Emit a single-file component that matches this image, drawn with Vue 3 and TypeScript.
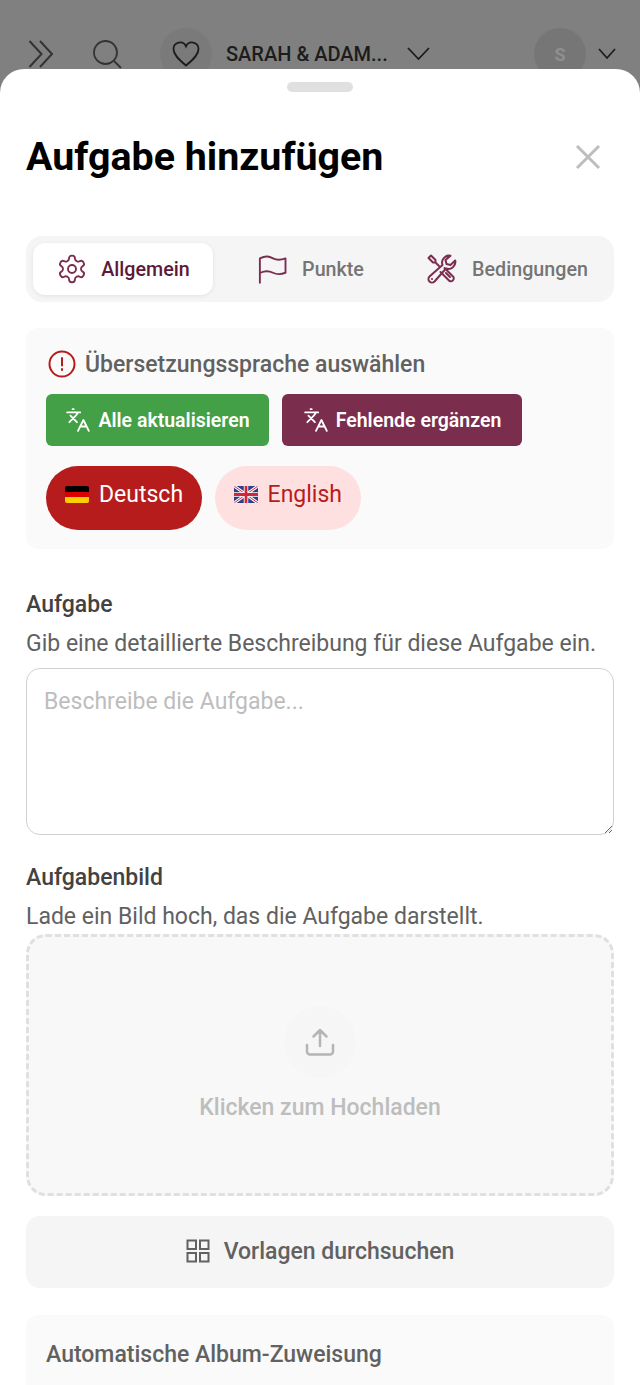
<template>
  <div class="page">
    <header class="topbar">
      <svg class="ic-menu" width="28" height="30" viewBox="0 0 28 30"><path d="M1.500 2l12 13-12 13M12 2l12 13-12 13" /></svg>
      <svg class="ic-search" width="30" height="30" viewBox="0 0 30 30"><circle cx="13.500" cy="13.500" r="11.500" /><path d="M22 22l7 7" /></svg>
      <div class="couple">
        <div class="heart-circle">
          <svg width="28" height="26" viewBox="0 0 28 26"><path d="M14 24.500C6 18 1.500 13.500 1.500 8A6.500 6.500 0 0 1 14 5.500 6.500 6.500 0 0 1 26.500 8C26.500 13.500 22 18 14 24.500z" /></svg>
        </div>
        <span class="couple-name">SARAH &amp; ADAM...</span>
        <svg class="chev" width="23" height="14" viewBox="0 0 23 14"><path d="M1 1l10.500 11L22 1" /></svg>
      </div>
      <div class="avatar">S</div>
      <svg class="chev" width="18" height="12" viewBox="0 0 18 12"><path d="M1 1l8 9 8-9" /></svg>
    </header>

    <section class="sheet">
      <div class="handle"></div>
      <div class="title-row">
        <h1>Aufgabe hinzufügen</h1>
        <svg class="close" width="26" height="26" viewBox="0 0 26 26"><path d="M2 2l22 22M24 2L2 24" /></svg>
      </div>

      <nav class="tabs">
        <button v-for="tab in tabs" :key="tab.id" :class="['tab', { active: tab.id === activeTab }]" @click="activeTab = tab.id">
          <svg :width="tab.size" :height="tab.size" :viewBox="tab.box" :stroke-width="tab.stroke" class="tab-icon">
            <path v-for="(d, i) in tab.paths" :key="i" :d="d" />
            <circle v-if="tab.id === 'general'" cx="12" cy="12" r="3" />
          </svg>
          <span>{{ tab.label }}</span>
        </button>
      </nav>

      <div class="lang-card">
        <div class="lang-head">
          <svg width="28" height="28" viewBox="0 0 28 28" class="alert"><circle cx="14" cy="14" r="12.500" /><path d="M14 8v7.500M14 19v1" /></svg>
          <span>Übersetzungssprache auswählen</span>
        </div>
        <div class="actions">
          <button class="action green">
            <svg width="26" height="26" viewBox="0 0 24 24"><path d="M5 8l6 6M4 14l6-6 2-3M2 5h12M7 2h1M22 22l-5-10-5 10M14 18h6" /></svg>
            Alle aktualisieren
          </button>
          <button class="action plum">
            <svg width="26" height="26" viewBox="0 0 24 24"><path d="M5 8l6 6M4 14l6-6 2-3M2 5h12M7 2h1M22 22l-5-10-5 10M14 18h6" /></svg>
            Fehlende ergänzen
          </button>
        </div>
        <div class="chips">
          <button class="chip on">
            <span class="flag de"></span>
            Deutsch
          </button>
          <button class="chip">
            <svg class="flag" width="24" height="17" viewBox="0 0 24 17">
              <rect width="24" height="17" fill="#2f3f86" />
              <path d="M0 0l24 17M24 0L0 17" stroke="#fff" stroke-width="3" />
              <path d="M0 0l24 17M24 0L0 17" stroke="#d0283a" stroke-width="1" />
              <path d="M12 0v17M0 8.500h24" stroke="#fff" stroke-width="4.500" />
              <path d="M12 0v17M0 8.500h24" stroke="#d0283a" stroke-width="2.800" />
            </svg>
            English
          </button>
        </div>
      </div>

      <div class="field first">
        <label>Aufgabe</label>
        <p>Gib eine detaillierte Beschreibung für diese Aufgabe ein.</p>
        <textarea v-model="description" placeholder="Beschreibe die Aufgabe..."></textarea>
      </div>

      <div class="field second">
        <label>Aufgabenbild</label>
        <p>Lade ein Bild hoch, das die Aufgabe darstellt.</p>
        <div class="dropzone">
          <div class="upload-circle">
            <svg width="30" height="30" viewBox="0 0 30 30"><path d="M15 19V3M8.500 9.500L15 3l6.500 6.500M2 18v6.500a3 3 0 0 0 3 3h20a3 3 0 0 0 3-3V18" /></svg>
          </div>
          <span>Klicken zum Hochladen</span>
        </div>
      </div>

      <button class="browse">
        <svg width="24" height="24" viewBox="0 0 24 24"><rect x="1.500" y="1.500" width="8.500" height="8.500" /><rect x="14" y="1.500" width="8.500" height="8.500" /><rect x="1.500" y="14" width="8.500" height="8.500" /><rect x="14" y="14" width="8.500" height="8.500" /></svg>
        Vorlagen durchsuchen
      </button>

      <div class="album-card">Automatische Album-Zuweisung</div>
    </section>
  </div>
</template>

<script setup lang="ts">
import { ref } from 'vue'

const activeTab = ref('general')
const description = ref('')

const tabs = [
  {
    id: 'general',
    label: 'Allgemein',
    size: 32,
    box: '0 0 24 24',
    stroke: 1.4,
    paths: ['M12.200 2h-.4a2 2 0 0 0-2 2v.2a2 2 0 0 1-1 1.700l-.4.300a2 2 0 0 1-2 0l-.200-.100a2 2 0 0 0-2.700.700l-.200.400a2 2 0 0 0 .700 2.700l.200.100a2 2 0 0 1 1 1.700v.500a2 2 0 0 1-1 1.700l-.200.100a2 2 0 0 0-.700 2.700l.200.400a2 2 0 0 0 2.700.700l.200-.100a2 2 0 0 1 2 0l.4.300a2 2 0 0 1 1 1.700v.200a2 2 0 0 0 2 2h.4a2 2 0 0 0 2-2v-.2a2 2 0 0 1 1-1.700l.4-.300a2 2 0 0 1 2 0l.200.100a2 2 0 0 0 2.700-.700l.200-.400a2 2 0 0 0-.700-2.700l-.200-.100a2 2 0 0 1-1-1.700v-.500a2 2 0 0 1 1-1.700l.200-.100a2 2 0 0 0 .700-2.700l-.200-.400a2 2 0 0 0-2.700-.700l-.200.100a2 2 0 0 1-2 0l-.4-.300a2 2 0 0 1-1-1.700V4a2 2 0 0 0-2-2z']
  },
  {
    id: 'points',
    label: 'Punkte',
    size: 30,
    box: '0 0 24 24',
    stroke: 1.5,
    paths: ['M1.500 23V3.500c5-2.500 7.500-1.500 10.500 0s6 1.500 10 0V15c-4 1.500-7 1.500-10 0s-6-2-10 0']
  },
  {
    id: 'conditions',
    label: 'Bedingungen',
    size: 30,
    box: '0 0 30 30',
    stroke: 2,
    paths: [
      'M23.500 1.800A7 7 0 0 0 15.500 11L2.500 22.500a3.200 3.200 0 0 0 5 5L19 14.500A7 7 0 0 0 28.200 6.500L23.500 11l-4-1-1-4z',
      'M12 12L8.500 8.500H6L1.500 4 4 1.500 8.500 6v2.500',
      'M17.500 14l9 9a3 3 0 0 1-4 4l-9-9',
      'M19 19l4 4M5 25h.01'
    ]
  }
]
</script>

<style>
html, body { margin: 0; }
</style>

<style scoped>
.page {
  position: relative;
  width: 640px;
  height: 1385px;
  overflow: hidden;
  background: #808080;
  font-family: Roboto, "Liberation Sans", sans-serif;
  color: #616161;
}
svg { fill: none; stroke: currentColor; flex-shrink: 0; }

.topbar {
  display: flex;
  align-items: center;
  height: 52px;
  padding: 28px 24px 0 28px;
  color: #1c1c1c;
}
.ic-menu { stroke-width: 2; color: #333; }
.ic-search { margin-left: 36px; stroke-width: 1.800; color: #333; }
.couple { display: flex; align-items: center; margin-left: 38px; flex: 1; }
.heart-circle {
  width: 52px;
  height: 52px;
  border-radius: 50%;
  background: #7a7a7a;
  display: grid;
  place-items: center;
}
.heart-circle svg { stroke-width: 1.800; }
.couple-name { margin-left: 14px; font-size: 20px; font-weight: 500; white-space: nowrap; }
.couple .chev { margin-left: 19px; stroke-width: 1.800; }
.avatar {
  width: 52px;
  height: 52px;
  border-radius: 50%;
  background: #767676;
  color: #8f8f8f;
  display: grid;
  place-items: center;
  font-size: 18px;
  font-weight: 700;
  margin-right: 12px;
}
.chev { stroke-width: 1.700; }

.sheet {
  position: absolute;
  top: 69px;
  left: 0;
  right: 0;
  bottom: 0;
  background: #fff;
  border-radius: 24px 24px 0 0;
  padding: 13px 26px 0;
  box-sizing: border-box;
}
.handle { width: 66px; height: 10px; border-radius: 5px; background: #e0e0e0; margin: 0 auto; }
.title-row {
  display: flex;
  justify-content: space-between;
  align-items: center;
  margin-top: 37px;
  height: 56px;
  padding-right: 13px;
}
h1 { margin: 0; font-size: 39.400px; font-weight: 700; color: #000; line-height: 56px; white-space: nowrap; }
.close { color: #bdbdbd; stroke-width: 3; }

.tabs {
  display: flex;
  margin-top: 51px;
  padding: 7px;
  gap: 5px;
  height: 66px;
  box-sizing: border-box;
  background: #f5f5f5;
  border-radius: 16px;
}
.tab {
  flex: 1 1 auto;
  display: flex;
  align-items: center;
  justify-content: center;
  gap: 14px;
  border: 0;
  border-radius: 12px;
  background: none;
  font: 500 19.700px Roboto, sans-serif;
  color: #757575;
  padding: 0;
  white-space: nowrap;
}
.tab:nth-child(1) { flex: 0 0 180px; gap: 13px; }
.tab:nth-child(2) { flex: 0 0 180px; padding-left: 6px; }
.tab:nth-child(3) { padding-left: 5px; gap: 15px; }
.tab.active { background: #fff; color: #5c1a3a; box-shadow: 0 1px 4px rgba(0, 0, 0, .08); }
.tab-icon { color: #7b2d4e; stroke-linecap: round; stroke-linejoin: round; }

.lang-card {
  margin-top: 26px;
  height: 221px;
  box-sizing: border-box;
  padding: 20px;
  background: #fafafa;
  border-radius: 12px;
}
.lang-head { display: flex; align-items: center; gap: 9px; font-size: 23px; font-weight: 500; height: 32px; padding-left: 2px; }
.alert { color: #b71c1c; stroke-width: 2; stroke-linecap: round; }
.actions { display: flex; gap: 13px; margin-top: 14px; }
.action {
  height: 52px;
  display: flex;
  align-items: center;
  justify-content: center;
  gap: 7px;
  border: 0;
  border-radius: 6px;
  color: #fff;
  font: 600 19.500px Roboto, sans-serif;
  padding: 0;
}
.action svg { stroke-width: 1.700; stroke-linecap: round; stroke-linejoin: round; }
.green { background: #43a047; width: 223px; }
.plum { background: #7b2d4e; width: 240px; }
.chips { display: flex; gap: 13px; margin-top: 20px; }
.chip {
  height: 64px;
  display: flex;
  align-items: center;
  gap: 10px;
  border: 0;
  border-radius: 32px;
  padding: 0 18.500px 7px;
  background: #ffe0e0;
  color: #b71c1c;
  font: 400 23px Roboto, sans-serif;
}
.chip.on { background: #b71c1c; color: #fff; padding: 0 19px 7px; }
.flag { width: 24px; height: 17px; stroke: none; display: block; border-radius: 2px; }
.flag.de { background: linear-gradient(#000 33.300%, #dd0000 33.300% 66.600%, #ffce00 66.600%); }

.field label { display: block; font-size: 23px; font-weight: 500; color: #424242; line-height: 28px; }
.field p { margin: 11px 0 0; font-size: 23px; line-height: 28px; color: #616161; white-space: nowrap; }
.first { margin-top: 42px; }
.second { margin-top: 29px; }
textarea {
  display: block;
  width: 100%;
  height: 167px;
  box-sizing: border-box;
  margin-top: 10px;
  padding: 19px 17px;
  border: 1.500px solid #d0d0d0;
  border-radius: 14px;
  font: 400 23px Roboto, sans-serif;
  color: #424242;
  outline: none;
}
textarea::placeholder { color: #bdbdbd; }

.dropzone {
  margin-top: 3px;
  height: 262px;
  box-sizing: border-box;
  border: 3px dashed #e0e0e0;
  border-radius: 20px;
  background: #f8f8f8;
  display: flex;
  flex-direction: column;
  align-items: center;
  color: #bdbdbd;
  font-size: 23px;
  font-weight: 500;
}
.upload-circle {
  width: 72px;
  height: 72px;
  margin-top: 69px;
  border-radius: 50%;
  background: #f6f6f6;
  display: grid;
  place-items: center;
}
.upload-circle svg { stroke-width: 2.500; stroke-linecap: round; stroke-linejoin: round; color: #b5b5b5; }
.dropzone span { margin-top: 16px; }

.browse {
  margin-top: 20px;
  width: 100%;
  height: 72px;
  display: flex;
  align-items: center;
  justify-content: center;
  gap: 14px;
  border: 0;
  border-radius: 14px;
  padding: 0 0 2px;
  background: #f5f5f5;
  color: #616161;
  font: 500 23px Roboto, sans-serif;
}
.browse svg { stroke-width: 2; }

.album-card {
  margin-top: 27px;
  padding: 26px 20px;
  background: #fafafa;
  border-radius: 12px;
  font-size: 23px;
  font-weight: 500;
  line-height: 28px;
}
</style>
